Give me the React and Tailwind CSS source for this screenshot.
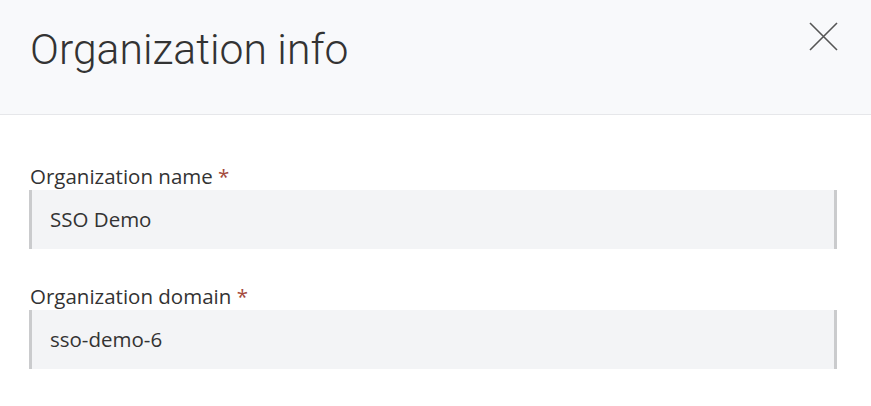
export default function App() {
  return (
    <div className="w-[871px] h-[406px] bg-white overflow-hidden" style={{ fontFamily: '"Open Sans", sans-serif' }}>
      {/* Header */}
      <div className="h-[115px] bg-[#f8f9fb] border-b border-[#e6e7ea] flex items-start justify-between pl-[30px] pr-[33px]">
        <h2 className="mt-[23px] text-[42.7px] leading-[52px] font-light text-[#333]" style={{ fontFamily: 'Roboto, sans-serif' }}>
          Organization info
        </h2>
        <button className="mt-[22px] w-[29px] h-[29px] text-[#555]">
          <svg viewBox="0 0 29 29" width="29" height="29" fill="none" stroke="currentColor" strokeWidth="1.6">
            <path d="M1 1 L28 28 M28 1 L1 28" />
          </svg>
        </button>
      </div>

      {/* Form */}
      <div className="px-[29px] pr-[34px] pt-[48px] flex flex-col gap-[34px]">
        <div>
          <label className="block pl-[1px] text-[20.5px] leading-[26px] text-[#333] mb-[1px]">
            Organization name <span className="text-[#a4493b]">*</span>
          </label>
          <div className="h-[59px] bg-[#f3f4f6] border-l-[3px] border-r-[3px] border-[#cacbcd] flex items-center pl-[18px] text-[20.5px] text-[#333]">
            SSO Demo
          </div>
        </div>
        <div>
          <label className="block pl-[1px] text-[20.5px] leading-[26px] text-[#333] mb-[1px]">
            Organization domain <span className="text-[#a4493b]">*</span>
          </label>
          <div className="h-[59px] bg-[#f3f4f6] border-l-[3px] border-r-[3px] border-[#cacbcd] flex items-center pl-[18px] text-[20.5px] text-[#333]">
            sso-demo-6
          </div>
        </div>
      </div>
    </div>
  );
}
